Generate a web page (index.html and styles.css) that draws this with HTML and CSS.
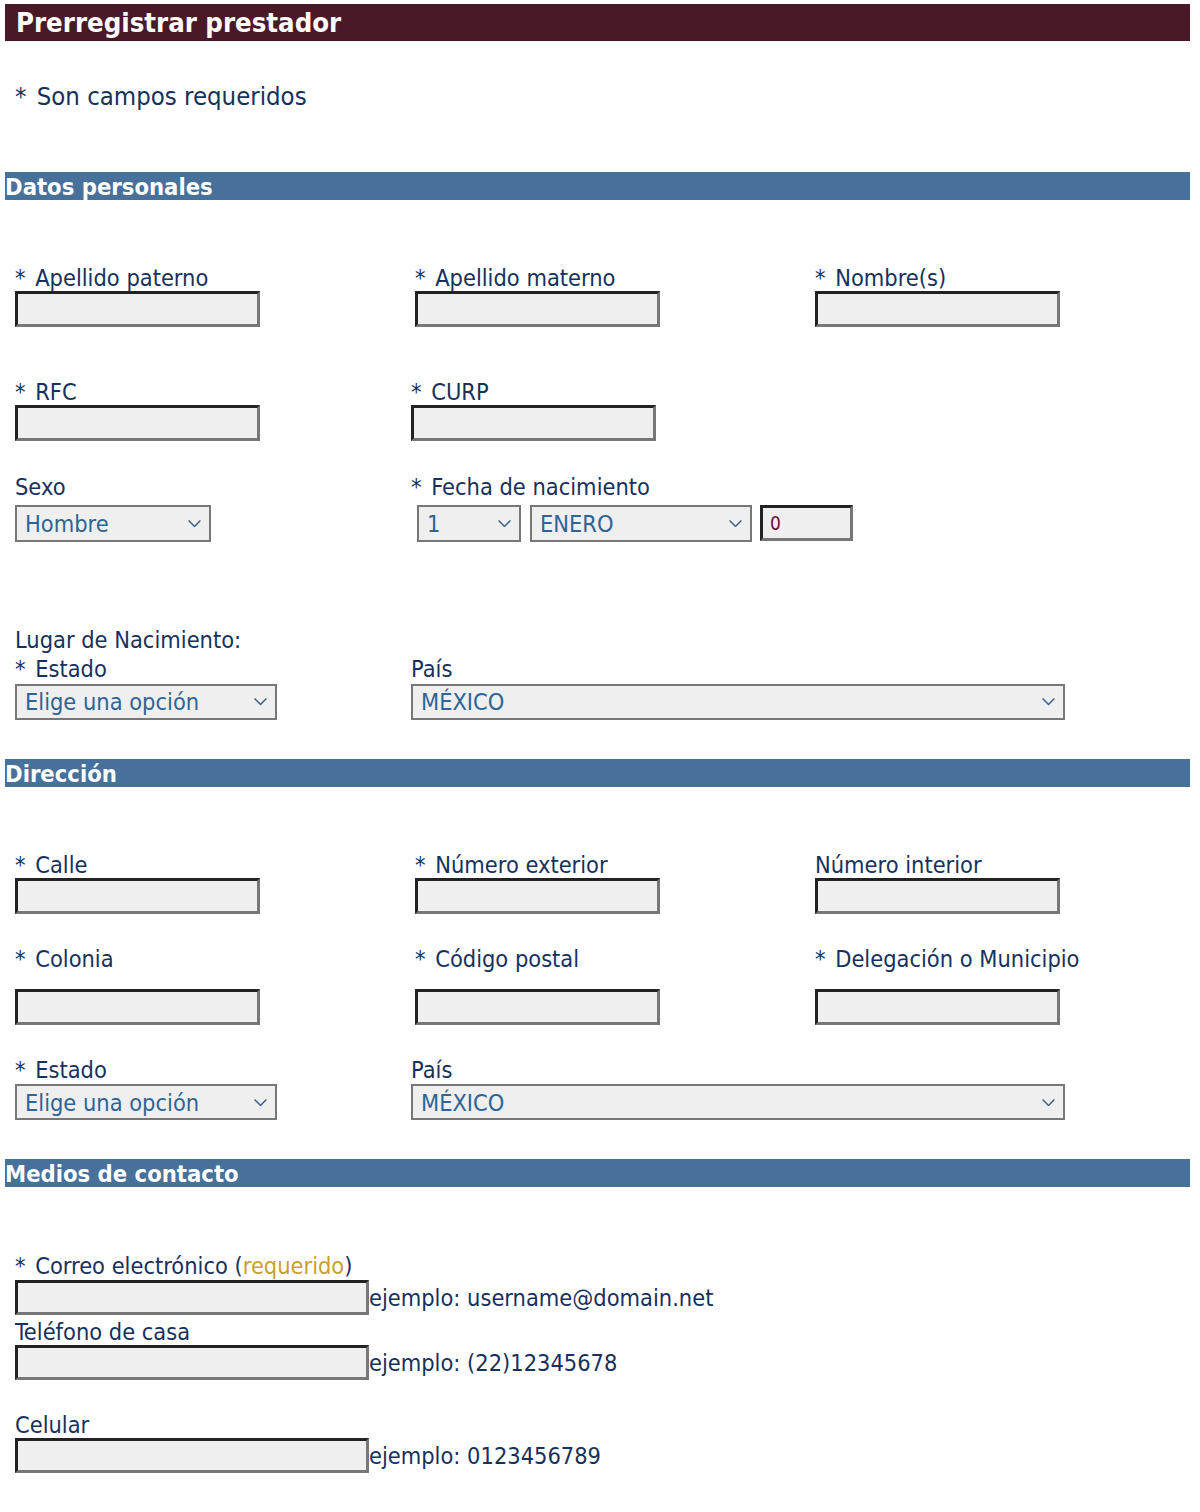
FILE: index.html
```html
<!DOCTYPE html>
<html lang="es">
<head>
<meta charset="utf-8">
<title>Prerregistrar prestador</title>
<link rel="stylesheet" href="styles.css">
</head>
<body>
<div class="page">
  <div class="titlebar">Prerregistrar prestador</div>
  <p class="note"><span class="req">*</span> Son campos requeridos</p>

  <div class="section">Datos personales</div>

  <div class="row row-a">
    <div class="field col400"><div class="label"><span class="req">*</span> Apellido paterno</div><input class="txt" type="text"></div>
    <div class="field col400"><div class="label"><span class="req">*</span> Apellido materno</div><input class="txt" type="text"></div>
    <div class="field"><div class="label"><span class="req">*</span> Nombre(s)</div><input class="txt" type="text"></div>
  </div>

  <div class="row row-b">
    <div class="field col396"><div class="label"><span class="req">*</span> RFC</div><input class="txt" type="text"></div>
    <div class="field"><div class="label"><span class="req">*</span> CURP</div><input class="txt" type="text"></div>
  </div>

  <div class="row row-c">
    <div class="field col396"><div class="label">Sexo</div>
      <div class="select w-sexo gap5"><span>Hombre</span><svg class="chev" viewBox="0 0 12 7"><path d="M0.5 0.5 L6 6 L11.5 0.5"/></svg></div>
    </div>
    <div class="field"><div class="label"><span class="req">*</span> Fecha de nacimiento</div>
      <div class="date gap5">
        <div class="select w-day"><span>1</span><svg class="chev" viewBox="0 0 12 7"><path d="M0.5 0.5 L6 6 L11.5 0.5"/></svg></div>
        <div class="select w-month"><span>ENERO</span><svg class="chev" viewBox="0 0 12 7"><path d="M0.5 0.5 L6 6 L11.5 0.5"/></svg></div>
        <input class="txt year" type="text" value="0">
      </div>
    </div>
  </div>

  <div class="row row-d bottom">
    <div class="field col396"><div class="label two">Lugar de Nacimiento:<br><span class="req">*</span> Estado</div>
      <div class="select w-estado"><span>Elige una opción</span><svg class="chev" viewBox="0 0 12 7"><path d="M0.5 0.5 L6 6 L11.5 0.5"/></svg></div>
    </div>
    <div class="field"><div class="label two">País</div>
      <div class="select w-pais"><span>MÉXICO</span><svg class="chev" viewBox="0 0 12 7"><path d="M0.5 0.5 L6 6 L11.5 0.5"/></svg></div>
    </div>
  </div>

  <div class="section sec-gap">Dirección</div>

  <div class="row row-e">
    <div class="field col400"><div class="label"><span class="req">*</span> Calle</div><input class="txt" type="text"></div>
    <div class="field col400"><div class="label"><span class="req">*</span> Número exterior</div><input class="txt" type="text"></div>
    <div class="field"><div class="label">Número interior</div><input class="txt" type="text"></div>
  </div>

  <div class="row row-f">
    <div class="field col400"><div class="label"><span class="req">*</span> Colonia</div><input class="txt spaced" type="text"></div>
    <div class="field col400"><div class="label"><span class="req">*</span> Código postal</div><input class="txt spaced" type="text"></div>
    <div class="field"><div class="label"><span class="req">*</span> Delegación o Municipio</div><input class="txt spaced" type="text"></div>
  </div>

  <div class="row row-g">
    <div class="field col396"><div class="label"><span class="req">*</span> Estado</div>
      <div class="select w-estado tight"><span>Elige una opción</span><svg class="chev" viewBox="0 0 12 7"><path d="M0.5 0.5 L6 6 L11.5 0.5"/></svg></div>
    </div>
    <div class="field"><div class="label">País</div>
      <div class="select w-pais tight"><span>MÉXICO</span><svg class="chev" viewBox="0 0 12 7"><path d="M0.5 0.5 L6 6 L11.5 0.5"/></svg></div>
    </div>
  </div>

  <div class="section sec-gap">Medios de contacto</div>

  <div class="contact c-mail">
    <div class="label"><span class="req">*</span> Correo electrónico (<span class="gold">requerido</span>)</div>
    <div class="inline"><input class="txt wide" type="text"><span class="hint">ejemplo: username@domain.net</span></div>
  </div>
  <div class="contact c-tel">
    <div class="label">Teléfono de casa</div>
    <div class="inline"><input class="txt wide" type="text"><span class="hint">ejemplo: (22)12345678</span></div>
  </div>
  <div class="contact c-cel">
    <div class="label">Celular</div>
    <div class="inline"><input class="txt wide" type="text"><span class="hint">ejemplo: 0123456789</span></div>
  </div>
</div>
</body>
</html>
```

FILE: styles.css
```css
html, body {
  margin: 0;
  padding: 0;
  background: #ffffff;
}
body {
  font-family: "DejaVu Sans Condensed", "DejaVu Sans", sans-serif;
  font-stretch: condensed;
  font-size: 23.4px;
  color: #16315c;
}
.page {
  width: 1185px;
  margin-left: 5px;
  padding-top: 4px;
  padding-bottom: 30px;
}
.titlebar {
  height: 37px;
  line-height: 37px;
  background: #4a1928;
  color: #ffffff;
  font-weight: bold;
  font-size: 27.3px;
  padding-left: 11px;
  white-space: nowrap;
}
.note {
  margin: 41px 0 0 10px;
  line-height: 28px;
  font-size: 25.5px;
}
.req {
  margin-right: 3px;
}
.section {
  margin-top: 62px;
  height: 28px;
  line-height: 30px;
  background: #47709a;
  color: #ffffff;
  font-weight: bold;
  font-size: 23.6px;
  white-space: nowrap;
  overflow: visible;
}
.section.sec-gap {
  margin-top: 39px;
}
.row {
  display: flex;
  padding-left: 10px;
}
.row.bottom {
  align-items: flex-end;
}
.field {
  display: flex;
  flex-direction: column;
  align-items: flex-start;
}
.col400 { width: 400px; }
.col396 { width: 396px; }
.label {
  height: 27px;
  line-height: 29px;
  white-space: nowrap;
}
.label.two {
  height: auto;
  line-height: 29px;
}
.row-a { margin-top: 64px; }
.row-b { margin-top: 51px; }
.row-c { margin-top: 31.6px; }
.gap5 { margin-top: 5.4px; }
.row-d { margin-top: 83.9px; }
.row-e { margin-top: 64.3px; }
.row-f { margin-top: 31.3px; }
.row-g { margin-top: 30.9px; }

.txt {
  box-sizing: border-box;
  width: 245px;
  height: 36px;
  margin: 0;
  padding: 0 7px;
  border-width: 3px;
  border-style: solid;
  border-color: #222222 #777777 #777777 #222222;
  background: #efefef;
  font-family: inherit;
  font-size: 19px;
  color: #6a1030;
  outline: none;
}
.txt.spaced { margin-top: 17px; }
.tight { margin-top: 1px; }
.txt.wide {
  width: 354px;
  height: 35px;
}
.txt.year {
  width: 93px;
  height: 36px;
  margin-left: 8px;
}
.select {
  box-sizing: border-box;
  display: flex;
  align-items: center;
  justify-content: space-between;
  height: 37px;
  padding: 0 8px 0 8px;
  border: 2px solid #777777;
  background: #efefef;
  color: #2c6496;
  line-height: 33px;
  white-space: nowrap;
}
.select span {
  padding-top: 2px;
}
.chev {
  width: 13px;
  height: 7.5px;
  flex: none;
  fill: none;
  stroke: #36618c;
  stroke-width: 1.4;
}
.w-sexo { width: 196px; }
.w-estado { width: 262px; height: 36px; }
.w-pais { width: 654px; height: 36px; }
.date {
  display: flex;
  align-items: flex-start;
  margin-left: 6px;
}
.w-day { width: 104px; }
.w-month { width: 222px; margin-left: 9px; }

.contact {
  padding-left: 10px;
}
.c-mail { margin-top: 64.6px; }
.c-mail .inline { margin-top: 1.4px; }
.c-tel { margin-top: 2.6px; }
.c-cel { margin-top: 31.3px; }
.inline {
  display: flex;
  align-items: flex-end;
}
.hint {
  line-height: 27px;
  padding-bottom: 3px;
  white-space: nowrap;
}
.gold {
  color: #c9a030;
}
```
